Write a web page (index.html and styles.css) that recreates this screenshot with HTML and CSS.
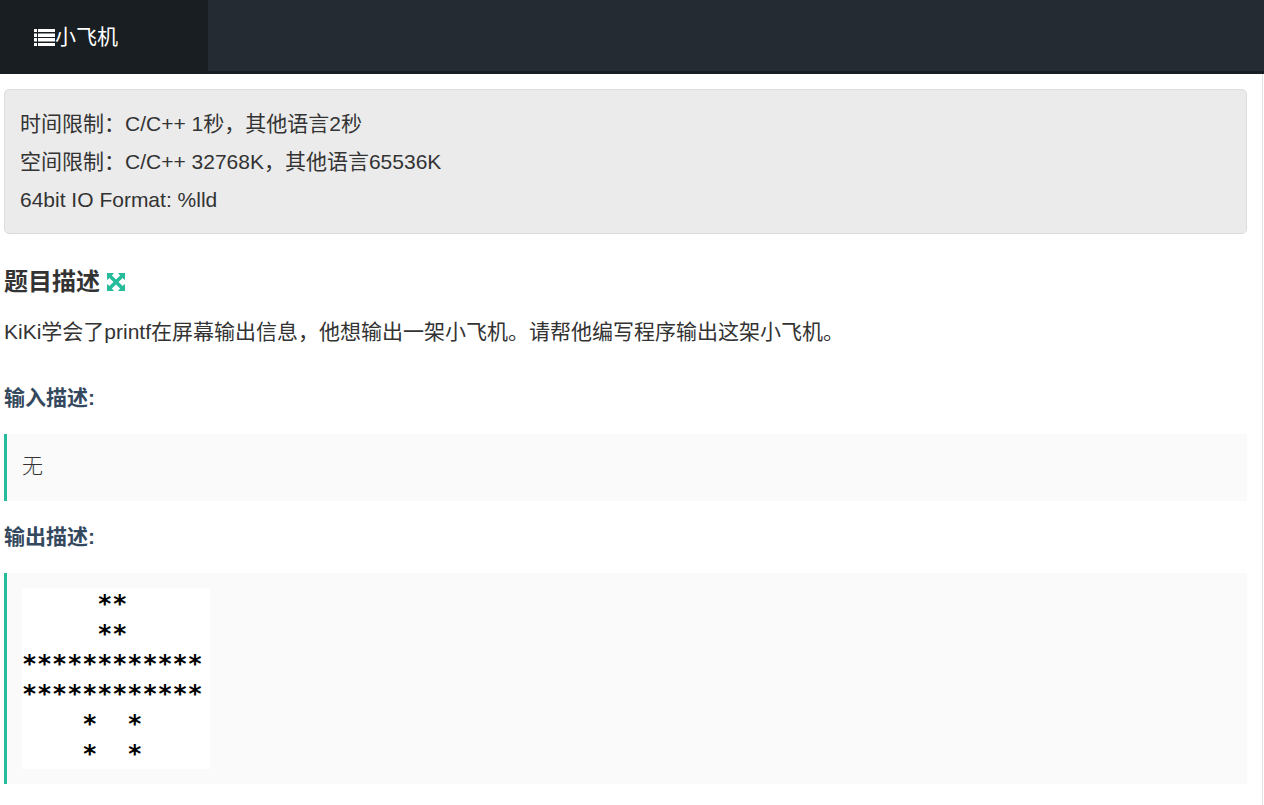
FILE: index.html
```html
<!DOCTYPE html>
<html lang="zh-CN">
  <head>
    <meta charset="UTF-8" />
    <meta name="viewport" content="width=device-width, initial-scale=1.0" />
    <title>小飞机</title>
    <link rel="stylesheet" href="styles.css" />
  </head>

  <body>
    <header class="top-bar">
      <a class="top-tab" href="#question">
        <svg class="list-icon" viewBox="0 0 21 17" aria-hidden="true">
          <path d="M0 0h3v3H0zM4 0h17v3H4zM0 4.5h3v3.5H0zM4 4.5h17v3.5H4zM0 9h3v3.5H0zM4 9h17v3.5H4zM0 14h3v3H0zM4 14h17v3H4z" />
        </svg>
        <span>小飞机</span>
      </a>
    </header>

    <main class="question" id="question">
      <div class="limits">
        <div>时间限制：C/C++ 1秒，其他语言2秒</div>
        <div>空间限制：C/C++ 32768K，其他语言65536K</div>
        <div>64bit IO Format: %lld</div>
      </div>

      <div class="title-row">
        <h1>题目描述</h1>
        <button class="expand-btn" type="button" aria-label="全屏">
          <svg viewBox="0 0 20 20" aria-hidden="true">
            <path d="M1 1h7L5.9 3.4 10 7.5l4.1-4.1L12 1h7v7l-2.4-2.1L12.5 10l4.1 4.1L19 12v7h-7l2.1-2.4-4.1-4.1-4.1 4.1L8 19H1v-7l2.4 2.1L7.5 10 3.4 5.9 1 8z" />
          </svg>
        </button>
      </div>
      <p class="description">KiKi学会了printf在屏幕输出信息，他想输出一架小飞机。请帮他编写程序输出这架小飞机。</p>

      <h2>输入描述:</h2>
      <pre class="block">无</pre>

      <h2>输出描述:</h2>
      <div class="block">
<pre class="plane">     **
     **
************
************
    *  *
    *  *</pre>
      </div>
    </main>
  </body>
</html>
```
FILE: styles.css
```css
* {
  box-sizing: border-box;
}

body {
  margin: 0;
  background-color: #fff;
  color: #333;
  font-family: "Liberation Sans", Arial, "Noto Sans CJK SC", sans-serif;
  font-size: 21px;
  line-height: 38px;
}

h1,
h2,
p,
pre {
  margin: 0;
}

.top-bar {
  display: flex;
  height: 74px;
  background-color: #252b33;
  border-bottom: 3px solid #181e21;
}

.top-tab {
  display: flex;
  align-items: center;
  width: 208px;
  height: 74px;
  padding-left: 34px;
  background-color: #181e21;
  color: #fff;
  text-decoration: none;
}

.list-icon {
  width: 21px;
  height: 17px;
  fill: #fff;
}

.question {
  min-height: calc(100vh - 74px);
  margin-right: 1px;
  padding: 15px 15px 21px 4px;
  border-right: 1px solid #e4e4e4;
}

.limits {
  padding: 15px 15px 14px;
  background-color: #ebebeb;
  border: 1px solid #dcdcdc;
  border-radius: 5px;
}

.title-row {
  display: flex;
  align-items: center;
  gap: 6px;
  margin-top: 30px;
}

h1 {
  font-size: 24px;
  line-height: 36px;
}

.expand-btn {
  width: 20px;
  height: 20px;
  padding: 0;
  border: 0;
  background: none;
  cursor: pointer;
}

.expand-btn svg {
  display: block;
  fill: #25bb9b;
}

.description {
  margin-top: 13px;
}

h2 {
  margin-top: 18px;
  color: #34495e;
  font-size: 21px;
  line-height: 36px;
}

.description + h2 {
  margin-top: 29px;
}

.block {
  margin-top: 18px;
  padding: 15px;
  background-color: #fafafa;
  border-left: 3px solid #25bb9b;
}

pre.block {
  padding: 14px 15px 17px;
  font-family: "Liberation Serif", "Noto Sans CJK SC", serif;
  font-weight: 300;
  line-height: 36px;
}

/* 小飞机 */
.plane {
  width: 188px;
  padding-top: 1px;
  background-color: #fff;
  color: #000;
  font-family: "DejaVu Sans Mono", monospace;
  font-size: 25px;
  font-weight: bold;
  line-height: 30px;
}
```
